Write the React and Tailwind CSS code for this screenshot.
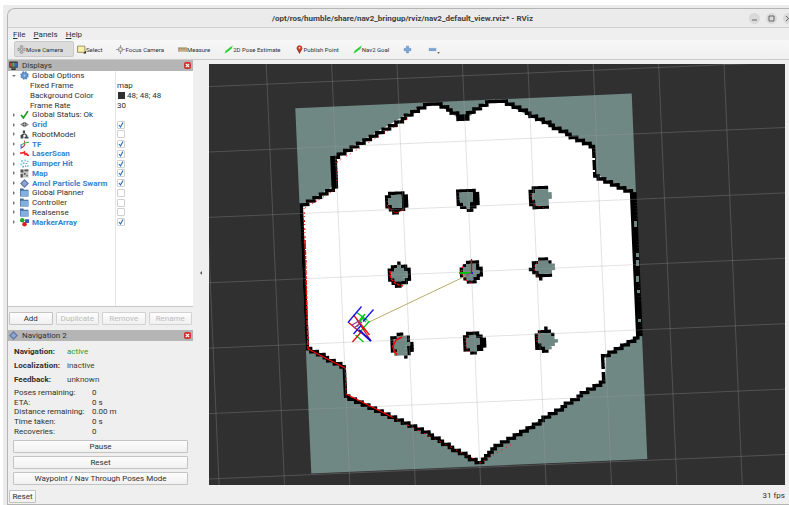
import { useState } from "react";

const CELL = 3.27;
const GRID_MATRIX = "matrix(1 -0.0425 0.0434 1 295.3 108.3)";

const WALL = [
  { from: [302, 205], to: [333, 186], stamp: "wide" },
  { from: [332, 184], to: [331, 160], stamp: "wide" },
  { from: [333, 158], to: [376, 133], stamp: "wide" },
  { from: [376, 133], to: [402, 118], stamp: "wide" },
  { from: [402, 118], to: [425, 105], stamp: "wide" },
  { from: [425, 104], to: [438, 104], stamp: "wide" },
  { from: [438, 105], to: [457, 117], stamp: "wide" },
  { from: [457, 116], to: [469, 116], stamp: "tall" },
  { from: [469, 114], to: [486, 102], stamp: "wide" },
  { from: [486, 101], to: [504, 101], stamp: "wide" },
  { from: [504, 102], to: [527, 114], stamp: "wide" },
  { from: [527, 114], to: [591, 147], stamp: "wide" },
  { from: [595, 149], to: [596, 174], stamp: "single" },
  { from: [596, 175], to: [630, 193], stamp: "wide" },
  { from: [631, 193], to: [636, 334], stamp: "wide" },
  { from: [635, 338], to: [606, 354], stamp: "wide" },
  { from: [604, 357], to: [604, 381], stamp: "single" },
  { from: [602, 383], to: [540, 420], stamp: "wide" },
  { from: [540, 420], to: [493, 450], stamp: "wide" },
  { from: [493, 450], to: [479, 463], stamp: "wide" },
  { from: [477, 462], to: [430, 436], stamp: "wide" },
  { from: [430, 436], to: [346, 395], stamp: "wide" },
  { from: [345, 394], to: [344, 367], stamp: "single" },
  { from: [342, 367], to: [308, 350], stamp: "wide" },
  { from: [307, 349], to: [302, 205], stamp: "single" },
];

const PILLARS = [
  { x: 384.7, y: 192, rows: [".#####.", "##ooo##", "#oooo##", "#oooo##", "##ooo##", ".#####.", "..##..."] },
  { x: 456, y: 189.5, rows: ["######.", "#oooo##", "#oooo##", "#oooo##", "##oo###", ".##o##.", "...##.."] },
  { x: 528.3, y: 186.5, rows: [".#####.", "##oooo.", "#oooooo", "#oooooo", "##oooo.", "##oooo.", ".#####."] },
  { x: 387.3, y: 262, rows: ["...#...", ".##o##.", "##ooo##", "#ooooo#", "#ooooo#", "##ooo##", ".#####.", "..##..."] },
  { x: 459.3, y: 261, rows: ["..####.", ".#ooo#.", "#oooo##", "#ooooo#", "#oooo##", ".#oo##.", "..###.."] },
  { x: 528.3, y: 258, rows: ["...###..", ".##ooo#.", ".#oooooo", "##oooooo", ".##oooo.", "..#####.", "...#...."] },
  { x: 390, y: 333, rows: ["..##...", "##ooo#.", "#oooo#.", "#ooooo#", "#oooo##", "##ooo##", ".oooo#.", "....#.."] },
  { x: 462.7, y: 332, rows: [".####..", "##oo##.", "#oooo##", "#oooo##", "#ooo###", "##oo##.", "..##..."] },
  { x: 534.3, y: 327, rows: ["...#...", ".####..", "#oooo#.", "#ooooo.", "#oooooo", "##oooo.", "###oo..", "..##..."] },
];

function toCell([x, y]) {
  const dx = x - 295.3;
  const dy = y - 108.3;
  const det = 1 + 0.0425 * 0.0434;
  return [
    Math.round((dx - 0.0434 * dy) / det / CELL - 0.5),
    Math.round((dy + 0.0425 * dx) / det / CELL - 0.5),
  ];
}

function traceWall() {
  const cells = new Map();
  const put = (x, y) => cells.set(`${x},${y}`, [x, y]);
  WALL.forEach(({ from, to, stamp }) => {
    const [x0, y0] = toCell(from);
    const [x1, y1] = toCell(to);
    const steps = Math.max(Math.abs(x1 - x0), Math.abs(y1 - y0), 1);
    for (let i = 0; i <= steps; i += 1) {
      const x = Math.round(x0 + ((x1 - x0) * i) / steps);
      const y = Math.round(y0 + ((y1 - y0) * i) / steps);
      put(x, y);
      if (stamp === "wide") put(x + 1, y);
      if (stamp === "tall") put(x, y + 1);
    }
  });
  return [...cells.values()];
}

const cellPath = (cells) =>
  cells.map(([x, y]) => `M${x * CELL} ${y * CELL}h3.4v3.4h-3.4z`).join("");

const WALL_PATH = cellPath(traceWall());

function pillarPath(rows, mark) {
  const cells = [];
  rows.forEach((row, y) =>
    [...row].forEach((c, x) => {
      if (c === mark) cells.push([x, y]);
    })
  );
  return cellPath(cells);
}

const columns = Array.from({ length: 11 }, (_, i) => 135.4 + i * 65.4);
const lines = Array.from({ length: 9 }, (_, i) => 86.6 + i * 65.4);

function MapView() {
  return (
    <svg
      viewBox="209 64 576 421"
      preserveAspectRatio="xMidYMid slice"
      className="block h-full w-full bg-[#303030]"
      role="img"
      aria-label="Map view"
    >
      <path d="M295.3 108.3L631.7 93.5L647.3 459L311.3 473.5Z" fill="#6f8884" />
      <path
        d="M303 205L335 185L333 158L404 116L426 104L438 104L458 118L470 116L486 102L503 102L527 115L594 148L596 174L632 193L637 336L606 354L605 381L540 420L492 449L479 462L430 436L347 395L345 367L308 349Z"
        fill="#fff"
      />
      <g transform={GRID_MATRIX} fill="#000">
        <path d={WALL_PATH} />
      </g>
      <path
        d="M634 221h3v6h-3zM636 253h3v4h-3zM636 260h3v6h-3zM636 276h3v6h-3zM637 290h3v3h-3zM638 319h3v3h-3z"
        fill="#6f8884"
      />
      <path d="M592 158h3v2h-3zM592 170h3v2h-3zM601 369h4v3h-4z" fill="#fff" />
      {PILLARS.map(({ x, y, rows }) => (
        <g key={`${x}-${y}`} transform={`matrix(1 -0.0425 0.0434 1 ${x} ${y})`}>
          <path d={pillarPath(rows, "#")} fill="#000" />
          <path d={pillarPath(rows, "o")} fill="#6f8884" />
        </g>
      ))}

      <g stroke="#a0a0a4" strokeOpacity="0.3" strokeWidth="1">
        {columns.map((x) => (
          <line key={x} x1={x} y1="63.5" x2={x + 18.3} y2="485" />
        ))}
        {lines.map((y) => (
          <line key={y} x1="209" y1={y} x2="785" y2={y - 24.5} />
        ))}
      </g>

      <g fill="none" stroke="#f00" strokeWidth="1">
        <path d="M304 208L306 262" strokeDasharray="1 3 2 2" />
        <path d="M305 240L308 349" strokeDasharray="5 1 3 1" strokeWidth="1.5" />
        <path d="M308 349L345 368" strokeWidth="1.4" />
        <path d="M345.5 368L346 392" strokeDasharray="2 3" />
        <path d="M346 394L392 417" strokeWidth="1.2" />
        <path d="M392 417L478 461" strokeDasharray="1 4 2 5" />
        <path d="M480 463L512 444" strokeDasharray="1 4" />
        <path d="M305 208L335 190" strokeDasharray="1 4 1 2" />
        <path d="M337 162L407 119" strokeDasharray="1 3 1 6" />
        <path d="M337 162L337 182" strokeDasharray="1 8" />
        <path d="M387 205L391 210L396 213L401 211L404 209" strokeDasharray="2 1" />
        <path d="M390 271L391 279L396 284L403 286" strokeDasharray="3 1" strokeWidth="1.4" />
        <path d="M402 337L396 340L393 346L394 351L397 355" strokeWidth="1.6" />
        <path d="M463 266L461 272L464 279L471 283" strokeDasharray="2 2" />
        <path d="M470 335L466 339L466 348L469 353" strokeDasharray="1 2" />
        <path d="M531 195L534 205L544 208" strokeDasharray="1 4" />
        <path d="M540 260L534 266L535 273L540 279" strokeDasharray="1 3" />
        <path d="M540 333L537 337L537 343" strokeDasharray="1 2" />
      </g>

      <path d="M367 323L470 274" stroke="#b9ab68" fill="none" />
      <g fill="none" strokeWidth="1.3">
        <path d="M471.5 259V272" stroke="#e00000" />
        <path d="M459 273H471" stroke="#00c800" strokeWidth="1.8" />
        <path d="M466 276L471 273" stroke="#a04080" />
        <path d="M471 273H473" stroke="#2020e0" strokeWidth="2" />
        <path d="M356 312L367.5 320.5M365 314L357 327M364 315L359 321M361 317L366 322M369.5 321L360 332M355.5 335L363.5 342" stroke="#00c814" />
        <path d="M348 322L361 333M353.5 315L369.5 335M352.5 342L362 331M357 320L371 341" stroke="#e01010" />
        <path d="M352 325L359 321M354 328L362 322" stroke="#a030a0" />
        <path d="M348 322.5L361.5 306.5M373.5 309.5L363 321.5M353.5 334L361 325.5" stroke="#1010e8" />
        <path d="M359 330L371 341" stroke="#1010d0" strokeWidth="2" />
      </g>
    </svg>
  );
}

function Glyph({ name }) {
  return (
    <svg viewBox="0 0 16 16" className="size-[9px] shrink-0" fill="none" aria-hidden="true">
      {name === "monitor" && (
        <>
          <rect x="0.5" y="1" width="15" height="11" rx="1" fill="#333" />
          <path d="M2 3h4v7H2z" fill="#c44" />
          <path d="M6 3h4v7H6z" fill="#4b5" />
          <path d="M10 3h4v7h-4z" fill="#46d" />
          <path d="M4 14.5h8" stroke="#333" strokeWidth="3" />
        </>
      )}
      {name === "gear" && (
        <>
          <circle cx="8" cy="8" r="6" fill="#6594c8" stroke="#5585bd" strokeWidth="3" strokeDasharray="3 1.7" />
          <circle cx="8" cy="8" r="5" fill="#6594c8" />
          <circle cx="8" cy="8" r="2" fill="#a9c8e8" />
        </>
      )}
      {name === "ok" && <path d="M2 9l4 5L14 2" stroke="#169c16" strokeWidth="3" />}
      {name === "eye" && (
        <>
          <path d="M0 8L8 3l8 5-8 5z" fill="#8b8b8b" />
          <circle cx="8" cy="8" r="3.5" fill="#555" />
          <path d="M4 8h8M8 4v8" stroke="#ccc" />
        </>
      )}
      {name === "robot" && (
        <path d="M1 15h5V9H1zM8 15h7v-3H8zM5 1h4v5H5zM9 6l4 3v3h-3V9L7 8zM3 7h4v2H3z" fill="#42474c" />
      )}
      {name === "tf" && (
        <>
          <path d="M8 10L1 15M2 7v8" stroke="#4768c8" strokeWidth="2" />
          <path d="M8 10V1" stroke="#e03030" strokeWidth="1.5" />
          <path d="M3 8l7-3 6-1" stroke="#36b846" strokeWidth="2" />
          <path d="M4 14l5-6" stroke="#d23" strokeWidth="1.5" />
        </>
      )}
      {name === "laser" && <path d="M0 7h5l3-2 1 5 3-2 1 3h3" stroke="#f01818" strokeWidth="2.5" />}
      {name === "points" && (
        <g fill="#51b3dc">
          <path d="M2 2h3v3H2zM8 1h2v3H8zM12 3h3v2h-3zM5 6h3v3H5zM10 7h3v2h-3zM1 8h2v3H1zM4 12h3v3H4zM9 11h2v3H9zM13 11h2v3h-2z" />
        </g>
      )}
      {name === "map" && (
        <>
          <path d="M1 1h14v14H1z" fill="#c4c4c4" />
          <path d="M1 1h5v5H1zM8 1h7v3H8zM1 9h4v6H1zM7 7h3v3H7zM11 11h3v2h-3z" fill="#555" />
        </>
      )}
      {name === "diamond" && (
        <>
          <path d="M8 0l8 8-8 8-8-8z" fill="#6078a8" />
          <path d="M8 3l5 5-5 5-5-5z" fill="#8ea5cf" />
        </>
      )}
      {name === "folder" && (
        <>
          <path d="M0 1h6l1 2h8v12H0z" fill="#456c96" />
          <path d="M1 5h14v10H1z" fill="#80afe0" />
        </>
      )}
      {name === "markers" && (
        <>
          <circle cx="4" cy="4" r="4" fill="#16ac2e" />
          <path d="M9 2h7v7H9z" fill="#3558c4" />
          <circle cx="8" cy="11" r="4" fill="#dc2020" />
        </>
      )}
      {name === "move" && (
        <path
          d="M8 0l3 3H9v4h4V5l3 3-3 3V9H9v4h2l-3 3-3-3h2V9H3v2L0 8l3-3v2h4V3H5z"
          fill="#d0d0d0"
          stroke="#777"
        />
      )}
      {name === "select" && (
        <>
          <path d="M1 2h13v11H1z" fill="#fbf0a8" stroke="#8c8250" strokeWidth="1.5" />
          <path d="M11 15h5v-5z" fill="#222" />
        </>
      )}
      {name === "focus" && (
        <>
          <circle cx="8" cy="8" r="3.5" stroke="#999" strokeWidth="2" />
          <path d="M8 0v6M8 10v6M0 8h6M10 8h6" stroke="#999" strokeWidth="2" />
        </>
      )}
      {name === "measure" && (
        <>
          <path d="M0 5h16v6H0z" fill="#cfb68f" stroke="#93805f" />
          <path d="M3 5v3M6 5v3M9 5v3M12 5v3" stroke="#7a6a4c" />
        </>
      )}
      {name === "arrow" && <path d="M1 15L3 10l8-6 5-3-3 6-8 6z" fill="#1fd42c" />}
      {name === "pin" && (
        <>
          <path d="M8 16L4 9a5 5 0 1 1 8 0z" fill="#9c3b26" />
          <circle cx="8" cy="5.5" r="4.5" fill="#cd3b2a" />
          <circle cx="8" cy="5" r="1.5" fill="#fff" />
        </>
      )}
      {name === "plus" && <path d="M6 2h4v4h4v4h-4v4H6v-4H2V6h4z" fill="#7ba7d6" stroke="#5b8bc0" />}
      {name === "minus" && <path d="M2 6h12v4H2z" fill="#7ba7d6" stroke="#5b8bc0" />}
    </svg>
  );
}

const tools = [
  { icon: "move", label: "Move Camera", active: true },
  { icon: "select", label: "Select" },
  { icon: "focus", label: "Focus Camera" },
  { icon: "measure", label: "Measure" },
  { icon: "arrow", label: "2D Pose Estimate" },
  { icon: "pin", label: "Publish Point" },
  { icon: "arrow", label: "Nav2 Goal" },
];

const initialDisplays = [
  { icon: "eye", name: "Grid", checked: true },
  { icon: "robot", name: "RobotModel", checked: false },
  { icon: "tf", name: "TF", checked: true },
  { icon: "laser", name: "LaserScan", checked: true },
  { icon: "points", name: "Bumper Hit", checked: true },
  { icon: "map", name: "Map", checked: true },
  { icon: "diamond", name: "Amcl Particle Swarm", checked: true },
  { icon: "folder", name: "Global Planner", checked: false },
  { icon: "folder", name: "Controller", checked: false },
  { icon: "folder", name: "Realsense", checked: false },
  { icon: "markers", name: "MarkerArray", checked: true },
];

const states = [
  { label: "Navigation:", value: "active", tone: "text-[#2e9a35]" },
  { label: "Localization:", value: "inactive", tone: "text-[#3c3c3c]" },
  { label: "Feedback:", value: "unknown", tone: "text-[#3c3c3c]" },
];

const progress = [
  ["Poses remaining:", "0"],
  ["ETA:", "0 s"],
  ["Distance remaining:", "0.00 m"],
  ["Time taken:", "0 s"],
  ["Recoveries:", "0"],
];

function TreeRow({ expander, icon, indent, label, children }) {
  return (
    <li className="grid grid-cols-[108px_1fr]">
      <div className="flex min-w-0 items-center border-r border-[#e6e6e6] whitespace-nowrap">
        {indent ? (
          <span className="w-[22px] shrink-0" />
        ) : (
          <>
            <button type="button" aria-label="Toggle row" className="flex w-[12px] shrink-0 justify-center">
              <svg viewBox="0 0 4 4" className="size-[4px]" fill="#777" aria-hidden="true">
                <path d={expander === "open" ? "M0 1h4L2 3z" : "M1 0l2 2-2 2z"} />
              </svg>
            </button>
            <Glyph name={icon} />
            <span className="w-[3px] shrink-0" />
          </>
        )}
        {label}
      </div>
      <div className="flex items-center pl-px">{children}</div>
    </li>
  );
}

function PanelHeader({ icon, title }) {
  return (
    <header className="flex h-[11px] shrink-0 items-center gap-[4px] bg-[#b5b5b5] pr-[2px] pl-px">
      <Glyph name={icon} />
      <h2 className="flex-1">{title}</h2>
      <button
        type="button"
        aria-label={`Close ${title}`}
        className="flex size-[7px] items-center justify-center rounded-[2px] bg-[#d22f2f]"
      >
        <svg viewBox="0 0 6 6" className="size-[5px]" stroke="#fff" strokeWidth="1.5" aria-hidden="true">
          <path d="M1 1l4 4M5 1L1 5" />
        </svg>
      </button>
    </header>
  );
}

function PushButton({ children, ...rest }) {
  return (
    <button
      type="button"
      className="flex h-[13px] w-full items-center justify-center rounded-[1px] border border-[#c3c3c3] bg-linear-to-b from-[#fdfdfd] to-[#f0f0f0] text-[#303030] disabled:border-[#d2d2d2] disabled:text-[#bdbdbd]"
      {...rest}
    >
      {children}
    </button>
  );
}

function Displays() {
  const [displays, setDisplays] = useState(initialDisplays);

  const toggle = (name) =>
    setDisplays((rows) =>
      rows.map((row) => (row.name === name ? { ...row, checked: !row.checked } : row))
    );

  return (
    <section className="flex min-h-0 flex-1 flex-col">
      <PanelHeader icon="monitor" title="Displays" />
      <div className="flex min-h-0 flex-1 flex-col border-b border-[#c8c8c8] bg-white">
        <ul className="grid h-[156px] shrink-0 auto-rows-fr">
          <TreeRow expander="open" icon="gear" label="Global Options" />
          <TreeRow indent label="Fixed Frame">map</TreeRow>
          <TreeRow indent label="Background Color">
            <span className="mr-[2px] ml-px size-[7px] bg-[#303030]" />
            48; 48; 48
          </TreeRow>
          <TreeRow indent label="Frame Rate">30</TreeRow>
          <TreeRow icon="ok" label="Global Status: Ok" />
          {displays.map(({ icon, name, checked }) => (
            <TreeRow
              key={name}
              icon={icon}
              label={
                <label
                  htmlFor={`display-${name}`}
                  className={checked ? "font-bold text-[#3584d0]" : ""}
                >
                  {name}
                </label>
              }
            >
              <span className="relative size-[8px]">
                <input
                  id={`display-${name}`}
                  type="checkbox"
                  checked={checked}
                  onChange={() => toggle(name)}
                  className="peer block size-[8px] appearance-none rounded-[1px] border border-[#d0d0d0] bg-white"
                />
                <svg
                  viewBox="0 0 8 8"
                  className="pointer-events-none absolute inset-0 hidden size-[8px] peer-checked:block"
                  fill="none"
                  stroke="#2f6fb5"
                  strokeWidth="1.2"
                  aria-hidden="true"
                >
                  <path d="M2 4l1.500 2L6 1.500" />
                </svg>
              </span>
            </TreeRow>
          ))}
        </ul>
        <div className="w-[108px] flex-1 border-r border-[#e6e6e6]" />
      </div>
      <div className="grid grid-cols-4 gap-[3px] px-px pt-[5px] pb-[5px]">
        <PushButton>Add</PushButton>
        <PushButton disabled>Duplicate</PushButton>
        <PushButton disabled>Remove</PushButton>
        <PushButton disabled>Rename</PushButton>
      </div>
    </section>
  );
}

function Navigation() {
  return (
    <section className="shrink-0">
      <PanelHeader icon="diamond" title="Navigation 2" />
      <div className="px-[5px] pt-[3px]">
        <dl>
          {states.map(({ label, value, tone }) => (
            <div key={label} className="grid h-[14px] grid-cols-[53px_1fr] items-center pl-px">
              <dt className="font-bold">{label}</dt>
              <dd className={tone}>{value}</dd>
            </div>
          ))}
        </dl>
        <dl className="mt-[2px] grid h-[48px] auto-rows-fr">
          {progress.map(([label, value]) => (
            <div key={label} className="grid grid-cols-[78px_1fr] items-center pl-px whitespace-nowrap">
              <dt>{label}</dt>
              <dd>{value}</dd>
            </div>
          ))}
        </dl>
        <div className="mt-[4px] flex flex-col gap-[3px]">
          <PushButton>Pause</PushButton>
          <PushButton>Reset</PushButton>
          <PushButton>Waypoint / Nav Through Poses Mode</PushButton>
        </div>
      </div>
    </section>
  );
}

function TitleBar() {
  return (
    <header className="-mr-[8px] grid h-[19px] shrink-0 grid-cols-[1fr_auto_1fr] items-center border-b border-[#cfcfcf] bg-[#ebebeb]">
      <h1 className="col-start-2 text-[8px] font-bold whitespace-nowrap text-[#404040]">
        /opt/ros/humble/share/nav2_bringup/rviz/nav2_default_view.rviz* - RViz
      </h1>
      <div className="mr-[3px] flex justify-end gap-[6px]">
        {["M3 7h5", "M3 3h5v5H3z", "M3 3l5 5M8 3L3 8"].map((d) => (
          <button key={d} type="button" aria-label="Window control" className="size-[11px] rounded-full bg-[#d9d9d9]">
            <svg viewBox="0 0 11 11" className="block size-[11px]" fill="none" stroke="#666" aria-hidden="true">
              <path d={d} />
            </svg>
          </button>
        ))}
      </div>
    </header>
  );
}

function App() {
  return (
    <div className="h-screen overflow-hidden bg-white pt-[5px] pl-[3px] font-['Roboto','Liberation_Sans',sans-serif] text-[8px] leading-[9px] text-[#303030]">
      <div className="h-full bg-[#ececec] pt-[3px] pl-[4px]">
        <main className="flex h-full flex-col overflow-hidden rounded-tl-[8px] border-t border-b border-l border-[#b4b4b4] bg-[#efefef]">
          <TitleBar />
          <nav className="flex h-[12px] shrink-0 items-center gap-[8px] pl-[5px]">
            {["File", "Panels", "Help"].map((item) => (
              <button key={item} type="button">
                <span className="underline">{item[0]}</span>
                {item.slice(1)}
              </button>
            ))}
          </nav>
          <div className="flex h-[20px] shrink-0 items-center border-b border-[#cccccc] bg-linear-to-b from-[#f8f8f8] to-[#efefef] pb-px pl-[6px] text-[6px] whitespace-nowrap">
            {tools.map(({ icon, label, active }) => (
              <button
                key={label}
                type="button"
                className={
                  active
                    ? "flex h-[16px] items-center rounded-[2px] border border-[#c9c9c9] bg-[#dcdcdc] pr-[10px] pl-[2px]"
                    : "flex h-[16px] items-center pr-[11px] pl-[3px]"
                }
              >
                <Glyph name={icon} />
                {label}
              </button>
            ))}
            <button type="button" aria-label="Add tool" className="flex items-center pl-[3px]">
              <Glyph name="plus" />
            </button>
            <button type="button" aria-label="Remove tool" className="flex items-end pl-[16px]">
              <Glyph name="minus" />
              <svg viewBox="0 0 4 3" className="h-[2px] w-[3px]" fill="#666" aria-hidden="true">
                <path d="M0 0h4L2 3z" />
              </svg>
            </button>
          </div>
          <div className="flex min-h-0 flex-1">
            <aside className="flex w-[185px] shrink-0 flex-col">
              <Displays />
              <Navigation />
            </aside>
            <button
              type="button"
              aria-label="Collapse panels"
              className="flex w-[16px] shrink-0 items-center justify-center"
            >
              <svg viewBox="0 0 4 4" className="size-[4px]" fill="#555" aria-hidden="true">
                <path d="M3 0v4L1 2z" />
              </svg>
            </button>
            <div className="mt-[4px] mr-[4px] min-w-0 flex-1">
              <MapView />
            </div>
          </div>
          <footer className="flex h-[19px] shrink-0 items-end justify-between pr-[4px] pb-px pl-px">
            <div className="w-[27px]">
              <PushButton>Reset</PushButton>
            </div>
            <span className="h-[12px]">31 fps</span>
          </footer>
        </main>
      </div>
    </div>
  );
}

export default App;
